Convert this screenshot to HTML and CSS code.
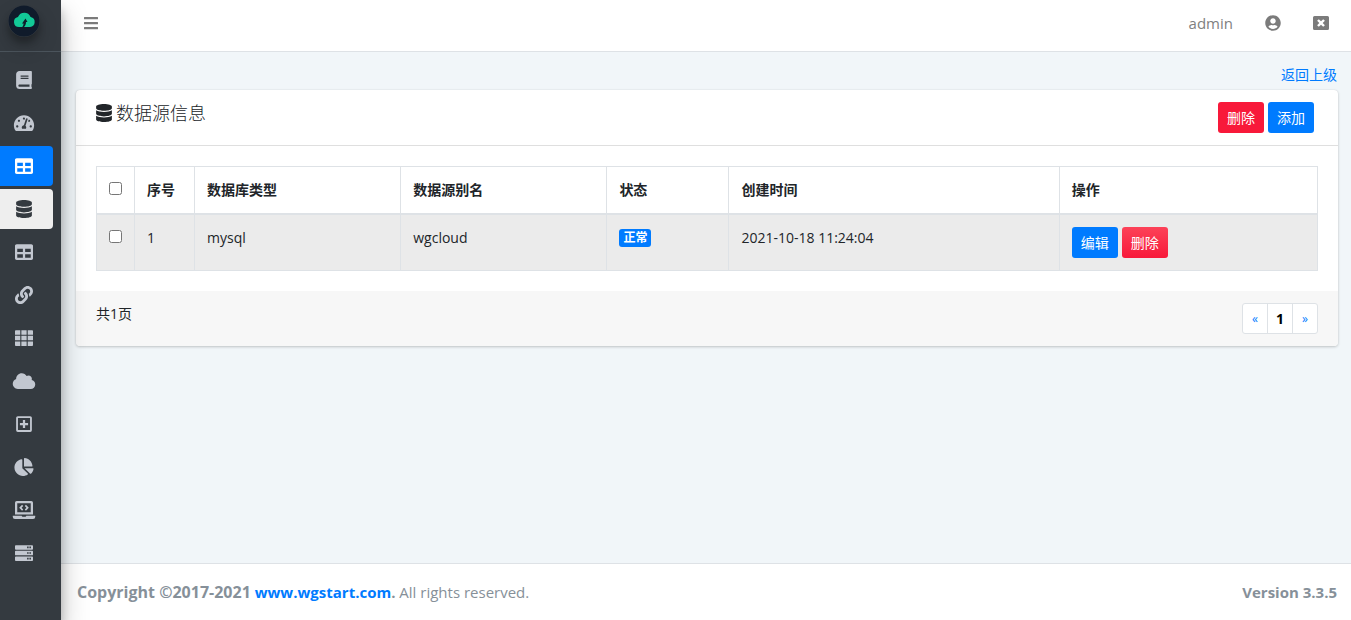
FILE: index.html
```html
<!DOCTYPE html>
<html lang="zh-CN">
<head>
<meta charset="utf-8">
<meta name="viewport" content="width=device-width, initial-scale=1">
<title>数据源信息</title>
<link rel="stylesheet" href="styles.css">
</head>
<body>
<svg class="sprite" aria-hidden="true">
  <symbol id="i-database" viewBox="0 0 448 512"><path d="M448 73.143v45.714C448 159.143 347.667 192 224 192S0 159.143 0 118.857V73.143C0 32.857 100.333 0 224 0s224 32.857 224 73.143zM448 176v102.857C448 319.143 347.667 352 224 352S0 319.143 0 278.857V176c48.125 33.143 136.208 48.572 224 48.572S399.874 209.143 448 176zm0 160v102.857C448 479.143 347.667 512 224 512S0 479.143 0 438.857V336c48.125 33.143 136.208 48.572 224 48.572S399.874 369.143 448 336z"/></symbol>
  <symbol id="i-table" viewBox="0 0 512 512"><path d="M464 32H48C21.490 32 0 53.490 0 80v352c0 26.510 21.490 48 48 48h416c26.510 0 48-21.490 48-48V80c0-26.510-21.490-48-48-48zM224 416H64v-96h160v96zm0-160H64v-96h160v96zm224 160H288v-96h160v96zm0-160H288v-96h160v96z"/></symbol>
</svg>
<div class="app">
  <aside class="sidebar">
    <a class="brand" href="#" aria-label="WGCLOUD">
      <svg class="logo" viewBox="0 0 32 32"><circle cx="16" cy="16" r="15.500" fill="#101b2b"/><path d="M11 22a5 5 0 0 1-1-9.900 6.800 6.800 0 0 1 12.600 0A5 5 0 0 1 22 22z" fill="#12c997"/><path d="M17.500 13.500l2 3.500-1.500 0c0 2.500-.8 4-2.300 5.200h-1.700c1-1 1.500-2.200 1.600-3.700H14z" fill="#101b2b"/></svg>
    </a>
    <nav class="menu">
      <a class="item" href="#" aria-label="book"><svg class="icon" viewBox="0 0 448 512"><path d="M448 360V24c0-13.300-10.700-24-24-24H96C43 0 0 43 0 96v320c0 53 43 96 96 96h328c13.300 0 24-10.700 24-24v-16c0-7.500-3.500-14.300-8.900-18.700-4.200-15.400-4.200-59.300 0-74.700 5.400-4.300 8.900-11.100 8.900-18.600zM128 134c0-3.300 2.700-6 6-6h212c3.300 0 6 2.700 6 6v20c0 3.300-2.700 6-6 6H134c-3.300 0-6-2.700-6-6v-20zm0 64c0-3.300 2.700-6 6-6h212c3.300 0 6 2.700 6 6v20c0 3.300-2.700 6-6 6H134c-3.300 0-6-2.700-6-6v-20zm253.400 250H96c-17.700 0-32-14.300-32-32 0-17.600 14.400-32 32-32h285.400c-1.900 17.100-1.900 46.900 0 64z"/></svg></a>
      <a class="item" href="#" aria-label="dashboard"><svg class="icon" viewBox="0 0 576 512"><path d="M288 32C128.940 32 0 160.940 0 320c0 52.800 14.250 102.260 39.060 144.800 5.610 9.620 16.300 15.200 27.440 15.200h443c11.140 0 21.830-5.580 27.440-15.200C561.750 422.260 576 372.800 576 320c0-159.060-128.940-288-288-288zm0 64c14.710 0 26.580 10.130 30.320 23.650-1.110 2.260-2.640 4.230-3.450 6.670l-9.220 27.670c-5.130 3.490-10.970 6.010-17.640 6.010-17.670 0-32-14.330-32-32S270.330 96 288 96zM96 384c-17.670 0-32-14.330-32-32s14.330-32 32-32 32 14.330 32 32-14.330 32-32 32zm48-160c-17.670 0-32-14.330-32-32s14.330-32 32-32 32 14.330 32 32-14.330 32-32 32zm246.770-72.410l-61.330 184C343.130 347.330 352 364.540 352 384c0 11.720-3.380 22.550-8.880 32H232.880c-5.500-9.450-8.880-20.280-8.880-32 0-33.940 26.500-61.430 59.900-63.590l61.340-184.010c4.170-12.560 17.730-19.450 30.360-15.170 12.570 4.190 19.350 17.790 15.170 30.360zm14.660 57.200l15.520-46.550c3.470-1.290 7.130-2.230 11.050-2.230 17.670 0 32 14.330 32 32s-14.330 32-32 32c-11.380-.01-20.890-6.280-26.570-15.220zM480 384c-17.670 0-32-14.330-32-32s14.330-32 32-32 32 14.330 32 32-14.330 32-32 32z"/></svg></a>
      <a class="item item-active" href="#" aria-label="table"><svg class="icon"><use href="#i-table"/></svg></a>
      <a class="item item-current" href="#" aria-label="database"><svg class="icon"><use href="#i-database"/></svg></a>
      <a class="item" href="#" aria-label="data list"><svg class="icon"><use href="#i-table"/></svg></a>
      <a class="item" href="#" aria-label="link"><svg class="icon" viewBox="0 0 512 512"><path d="M326.612 185.391c59.747 59.809 58.927 155.698.36 214.590-.11.12-.24.25-.36.37l-67.200 67.200c-59.270 59.270-155.699 59.262-214.960 0-59.270-59.260-59.270-155.700 0-214.960l37.106-37.106c9.840-9.840 26.786-3.300 27.294 10.606.648 17.722 3.826 35.527 9.690 52.721 1.986 5.822.567 12.262-3.783 16.612l-13.087 13.087c-28.026 28.026-28.905 73.660-1.155 101.960 28.024 28.579 74.086 28.749 102.325.51l67.200-67.190c28.191-28.191 28.073-73.757 0-101.830-3.701-3.694-7.429-6.564-10.341-8.569a16.037 16.037 0 0 1-6.947-12.606c-.396-10.567 3.348-21.456 11.698-29.806l21.054-21.055c5.521-5.521 14.182-6.199 20.584-1.731a152.482 152.482 0 0 1 20.522 17.197zM467.547 44.449c-59.261-59.262-155.690-59.270-214.960 0l-67.200 67.200c-.12.12-.25.25-.36.37-58.566 58.892-59.387 154.781.36 214.590a152.454 152.454 0 0 0 20.521 17.196c6.402 4.468 15.064 3.789 20.584-1.731l21.054-21.055c8.350-8.350 12.094-19.239 11.698-29.806a16.037 16.037 0 0 0-6.947-12.606c-2.912-2.005-6.640-4.875-10.341-8.569-28.073-28.073-28.191-73.639 0-101.830l67.200-67.190c28.239-28.239 74.300-28.069 102.325.51 27.750 28.300 26.872 73.934-1.155 101.960l-13.087 13.087c-4.350 4.350-5.769 10.790-3.783 16.612 5.864 17.194 9.042 34.999 9.690 52.721.509 13.906 17.454 20.446 27.294 10.606l37.106-37.106c59.271-59.259 59.271-155.699.001-214.959z"/></svg></a>
      <a class="item" href="#" aria-label="grid"><svg class="icon" viewBox="0 0 512 512"><path d="M24 32h126v128H0V56a24 24 0 0 1 24-24zM181 32h150v128H181zM362 32h126a24 24 0 0 1 24 24v104H362zM0 192h150v128H0zM181 192h150v128H181zM362 192h150v128H362zM0 352h150v128H24a24 24 0 0 1-24-24zM181 352h150v128H181zM362 352h150v104a24 24 0 0 1-24 24H362z"/></svg></a>
      <a class="item" href="#" aria-label="cloud"><svg class="icon" viewBox="0 0 640 512"><path d="M537.600 226.600c4.100-10.700 6.400-22.400 6.400-34.600 0-53-43-96-96-96-19.700 0-38.100 6-53.300 16.200C367 64.200 315.300 32 256 32c-88.400 0-160 71.600-160 160 0 2.700.1 5.400.2 8.100C40.200 219.800 0 273.200 0 336c0 79.500 64.500 144 144 144h368c70.700 0 128-57.300 128-128 0-61.900-44-113.600-102.400-125.400z"/></svg></a>
      <a class="item" href="#" aria-label="add"><svg class="icon" viewBox="0 0 448 512"><path fill-rule="evenodd" d="M48 32h352a48 48 0 0 1 48 48v352a48 48 0 0 1-48 48H48a48 48 0 0 1-48-48V80a48 48 0 0 1 48-48zM52 84v344h344V84zM192 140h64v84h84v64h-84v84h-64v-84h-84v-64h84z"/></svg></a>
      <a class="item" href="#" aria-label="chart"><svg class="icon" viewBox="0 0 544 512"><path d="M527.790 288H290.500l158.030 158.030c6.040 6.040 15.980 6.530 22.190.68 38.700-36.460 65.320-85.610 73.130-140.860 1.340-9.460-6.510-17.850-16.060-17.850zm-15.830-64.800C503.720 103.740 408.260 8.280 288.800.04 279.680-.59 272 7.100 272 16.240V240h223.770c9.140 0 16.820-7.680 16.190-16.800zM224 288V50.710c0-9.550-8.390-17.400-17.840-16.060C86.990 51.490-4.100 155.600.14 280.370 4.500 408.510 114.830 513.590 243.030 511.980c50.400-.63 96.970-16.870 135.260-44.030 7.900-5.600 8.420-17.230 1.570-24.080L224 288z"/></svg></a>
      <a class="item" href="#" aria-label="code"><svg class="icon" viewBox="0 0 640 512"><path fill-rule="evenodd" d="M112 0h416a48 48 0 0 1 48 48v336H64V48a48 48 0 0 1 48-48zM128 64v256h384V64zM0 416h256c3 20 16 32 32 32h64c16 0 29-12 32-32h256v32a64 64 0 0 1-64 64H64a64 64 0 0 1-64-64z"/><path d="M265 110l34 34-48 48 48 48-34 34-82-82zM375 110l-34 34 48 48-48 48 34 34 82-82z"/></svg></a>
      <a class="item" href="#" aria-label="server"><svg class="icon" viewBox="0 0 512 512"><path fill-rule="evenodd" d="M24 32h464a24 24 0 0 1 24 24v80a24 24 0 0 1-24 24H24a24 24 0 0 1-24-24V56a24 24 0 0 1 24-24zM24 192h464a24 24 0 0 1 24 24v80a24 24 0 0 1-24 24H24a24 24 0 0 1-24-24v-80a24 24 0 0 1 24-24zM24 352h464a24 24 0 0 1 24 24v80a24 24 0 0 1-24 24H24a24 24 0 0 1-24-24v-80a24 24 0 0 1 24-24zM344 74h44v44h-44zM410 74h44v44h-44zM344 234h44v44h-44zM410 234h44v44h-44zM344 394h44v44h-44zM410 394h44v44h-44z"/></svg></a>
    </nav>
  </aside>
  <div class="page">
    <header class="topbar">
      <button class="tool" type="button" aria-label="菜单"><svg class="icon-sm" viewBox="0 0 448 512"><path d="M16 60h416q16 0 16 16v40q0 16-16 16H16q-16 0-16-16V76q0-16 16-16zM16 220h416q16 0 16 16v40q0 16-16 16H16q-16 0-16-16v-40q0-16 16-16zM16 380h416q16 0 16 16v40q0 16-16 16H16q-16 0-16-16v-40q0-16 16-16z"/></svg></button>
      <div class="account">
        <a class="user" href="#">admin</a>
        <a class="tool" href="#" aria-label="账号"><svg class="icon-sm" viewBox="0 0 496 512"><path d="M248 8C111 8 0 119 0 256s111 248 248 248 248-111 248-248S385 8 248 8zm0 96c48.600 0 88 39.400 88 88s-39.400 88-88 88-88-39.400-88-88 39.400-88 88-88zm0 344c-58.700 0-111.300-26.600-146.500-68.200 18.800-35.400 55.600-59.800 98.500-59.800 2.400 0 4.800.4 7.100 1.100 13 4.200 26.600 6.900 40.900 6.900 14.300 0 28-2.700 40.900-6.900 2.300-.7 4.700-1.100 7.100-1.100 42.900 0 79.700 24.400 98.500 59.800C359.300 421.400 306.700 448 248 448z"/></svg></a>
        <a class="tool" href="#" aria-label="退出"><svg class="icon-sm" viewBox="0 0 512 512"><path d="M464 32H48a48 48 0 0 0-48 48v352a48 48 0 0 0 48 48h416a48 48 0 0 0 48-48V80a48 48 0 0 0-48-48zM380 325l-54 54-70-70-70 70-54-54 70-69-70-69 54-54 70 70 70-70 54 54-70 69z"/></svg></a>
      </div>
    </header>
    <main class="content">
      <div class="back"><a href="#">返回上级</a></div>
      <section class="card">
        <div class="card-head">
          <h1 class="title"><svg class="icon"><use href="#i-database"/></svg>数据源信息</h1>
          <div class="actions">
            <button class="btn btn-danger" type="button">删除</button>
            <button class="btn btn-primary" type="button">添加</button>
          </div>
        </div>
        <div class="card-body">
          <table class="grid">
            <colgroup><col class="c-check"><col class="c-no"><col class="c-type"><col class="c-type"><col class="c-state"><col class="c-time"><col class="c-ops"></colgroup>
            <thead>
              <tr><th><input class="check" type="checkbox" aria-label="全选"></th><th>序号</th><th>数据库类型</th><th>数据源别名</th><th>状态</th><th>创建时间</th><th>操作</th></tr>
            </thead>
            <tbody>
              <tr>
                <td><input class="check" type="checkbox" aria-label="选择 wgcloud"></td><td>1</td><td>mysql</td><td>wgcloud</td><td><span class="badge">正常</span></td><td>2021-10-18 11:24:04</td>
                <td><div class="actions"><button class="btn btn-primary" type="button">编辑</button><button class="btn btn-danger btn-hover" type="button">删除</button></div></td>
              </tr>
            </tbody>
          </table>
        </div>
        <div class="card-foot">
          <span>共1页</span>
          <nav class="pager" aria-label="分页"><a href="#">«</a><a class="here" href="#">1</a><a href="#">»</a></nav>
        </div>
      </section>
    </main>
    <footer class="footer">
      <div><strong><span class="owner">Copyright ©2017-2021</span> <a href="#">www.wgstart.com</a>.</strong> All rights reserved.</div>
      <strong>Version 3.3.5</strong>
    </footer>
  </div>
</div>
</body>
</html>
```
FILE: styles.css
```css
* { box-sizing: border-box; }
body {
  margin: 0;
  background: #f1f6f9;
  color: #212529;
  font: 14px/22px "Open Sans", "Noto Sans CJK SC", sans-serif;
}
a { color: #007bff; text-decoration: none; }
button { font: inherit; cursor: pointer; }
.sprite { display: none; }
.icon { height: 18px; width: 24px; fill: currentColor; }
.icon-sm { display: block; height: 16px; width: 16px; fill: currentColor; }

.app { display: flex; min-height: 100vh; }
.sidebar {
  z-index: 1;
  flex: none;
  width: 61px;
  background: #343a40;
  box-shadow: 0 14px 28px rgba(0, 0, 0, .25), 0 10px 10px rgba(0, 0, 0, .22);
}
.brand {
  display: flex;
  height: 52px;
  padding: 5px 8px;
  border-bottom: 1px solid #4b545c;
}
.logo {
  width: 32px;
  height: 32px;
  border-radius: 50%;
  box-shadow: 0 10px 20px rgba(0, 0, 0, .19), 0 6px 6px rgba(0, 0, 0, .23);
}
.menu { display: flex; flex-direction: column; gap: 3px; padding: 8px 8px 8px 0; }
.item {
  display: flex;
  align-items: center;
  height: 40px;
  padding-left: 12px;
  border-radius: 0 4px 4px 0;
  color: #c2c7d0;
}
.item-active { background: #007bff; color: #fff; }
.item-current { background: #eeeeee; color: #343a40; }

.page { display: flex; flex: 1; flex-direction: column; min-width: 0; }
.topbar {
  display: flex;
  align-items: center;
  justify-content: space-between;
  height: 52px;
  padding: 0 22px;
  padding-bottom: 5px;
  border-bottom: 1px solid #dee2e6;
  background: #fff;
}
.tool { padding: 0; border: 0; background: none; color: #7b7b7b; }
.account { display: flex; align-items: center; gap: 32px; }
.user { color: #7f7f7f; font-size: 15px; }

.content { flex: 1; padding: 12px 13px 16px 15px; }
.back { padding: 0 1px 4px; text-align: right; }
.card {
  border-radius: 4px;
  background: #fff;
  box-shadow: 0 0 1px rgba(0, 0, 0, .13), 0 1px 3px rgba(0, 0, 0, .2);
}
.card-head {
  display: flex;
  justify-content: space-between;
  padding: 12px 24px 12px 20px;
  border-bottom: 1px solid #dfdfdf;
}
.title { display: flex; align-items: center; height: 22px; margin: 0; font-size: 18px; font-weight: 300; }
.title .icon { width: 16px; margin-right: 4px; }
.actions { display: flex; gap: 4px; }
.btn {
  height: 31px;
  padding: 0 8px;
  border: 0;
  border-radius: 3px;
  width: 46px;
  color: #fff;
}
.btn-primary { background: #007bff; }
.btn-danger { background: #f8193a; }
.btn-hover { background: linear-gradient(#fc4258, #f8193a); }

.card-body { padding: 20px; }
.grid { width: 100%; border-collapse: collapse; table-layout: fixed; }
.grid th, .grid td { padding: 12px; border: 1px solid #dee2e6; text-align: left; vertical-align: top; }
.grid th { border-bottom-width: 2px; font-weight: 700; }
.grid td { background: #ebebeb; }
.c-check { width: 38px; }
.c-no { width: 60px; }
.c-type { width: 206px; }
.c-state { width: 122px; }
.c-time { width: 330px; }
.c-ops { width: 258px; }
.check { display: block; width: 13px; height: 13px; margin: 3px 0 0; }
.badge {
  display: block;
  width: fit-content;
  margin-top: 2px;
  padding: 0 4px;
  border-radius: 3px;
  background: #007bff;
  color: #fff;
  font-size: 12px;
  font-weight: 700;
  line-height: 18px;
}
.card-foot {
  display: flex;
  justify-content: space-between;
  padding: 12px 20px;
  border-radius: 0 0 4px 4px;
  background: #f7f7f7;
}
.pager { display: flex; border: 1px solid #dee2e6; border-radius: 3px; background: #fff; }
.pager a { width: 24px; font-size: 12px; line-height: 29px; text-align: center; }
.pager a + a { width: 25px; border-left: 1px solid #dee2e6; }
.pager .here { color: #000; font-size: 14px; font-weight: 700; }
.footer {
  display: flex;
  justify-content: space-between;
  padding: 16px 14px 16px 16px;
  border-top: 1px solid #dee2e6;
  background: #fff;
  color: #869099;
  font-size: 15px;
  line-height: 24px;
}
.owner { font-size: 16px; }
```
